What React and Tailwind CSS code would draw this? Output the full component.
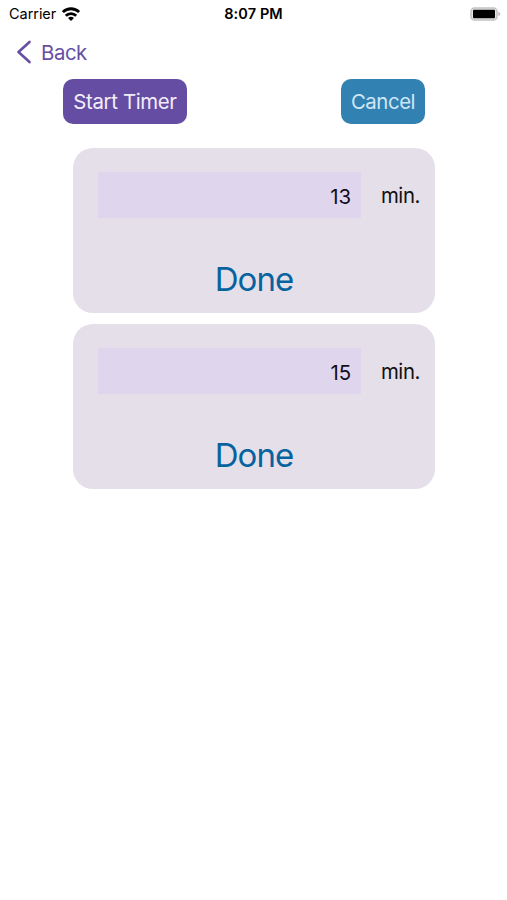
import React, { useState } from 'react';

const StatusBar = () => (
  <div className="grid grid-cols-3 items-center h-[28px] pl-[9px] pr-[6px] text-black">
    <div className="flex items-center gap-[6px]">
      <span className="text-[14.5px] tracking-[-0.05px]">Carrier</span>
      <svg className="w-[18px] h-[14px] -mt-px" viewBox="0 0 18 14" fill="none" stroke="currentColor" strokeWidth="2.8">
        <path d="M0.9 5.1a11.5 11.5 0 0 1 16.2 0" />
        <path d="M3.8 8.8a7.4 7.4 0 0 1 10.4 0" />
        <path d="M9 14L6 11.1a4.3 4.3 0 0 1 6 0z" fill="currentColor" stroke="none" />
      </svg>
    </div>
    <span className="-ml-[3px] text-center text-[14.5px] font-semibold tracking-[0.1px]">8:07 PM</span>
    <div className="flex items-center justify-end">
      <svg className="w-[31px] h-[14px] -mt-px" viewBox="0 0 31 14">
        <rect x="1" y="1" width="26" height="12" rx="3.5" fill="#e4e4e4" stroke="#c4c4c4" strokeWidth="1.6" />
        <rect x="3" y="2.8" width="22" height="8.4" rx="1" fill="#000" />
        <path d="M28.4 4.8v4.4c1-.4 1.8-1.2 1.8-2.2s-.8-1.8-1.8-2.2z" fill="#b8b8b8" />
      </svg>
    </div>
  </div>
);

const TimerCard = ({ value, onChange }) => (
  <div className="flex flex-col h-[165px] rounded-[20px] bg-[#e5dfea] pt-6 pl-[25px] pr-[15px]">
    <div className="flex items-center justify-between">
      <input
        type="text"
        inputMode="numeric"
        value={value}
        onChange={(e) => onChange(e.target.value)}
        className="w-[263px] h-[46px] pr-[10px] pt-[2px] bg-[#dfd6ee] text-right text-[20.4px] text-[#130d1a] tracking-[-0.1px] focus:outline-none"
      />
      <span className="pt-[3px] text-[20.4px] tracking-[-0.4px] text-[#111]">min.</span>
    </div>
    <button className="self-center mt-[40px] mr-[10px] w-[90px] text-[33px] leading-[42px] tracking-[-0.9px] text-[#0763a0]">
      Done
    </button>
  </div>
);

const App = () => {
  const [timers, setTimers] = useState(['13', '15']);

  const updateTimer = (index, value) => {
    setTimers(timers.map((timer, i) => (i === index ? value : timer)));
  };

  return (
    <div className="w-full min-h-screen bg-white font-['Inter',sans-serif]">
      <StatusBar />

      {/* Navigation */}
      <nav className="flex items-center h-[48px] pl-[16px]">
        <button className="flex items-center gap-[9px] text-[#6750a4]">
          <svg className="w-[16px] h-[24px]" fill="none" stroke="currentColor" viewBox="0 0 16 24">
            <path strokeLinecap="round" strokeLinejoin="round" strokeWidth={2.7} d="M13.5 2L2.5 12l11 10" />
          </svg>
          <span className="pt-[2px] text-[20.4px] tracking-[-0.45px]">Back</span>
        </button>
      </nav>

      {/* Actions */}
      <div className="flex justify-between pt-[3px] pl-[63px] pr-[82px]">
        <button className="w-[124px] h-[45px] pt-px rounded-[10px] bg-[#654da3] text-[20.4px] tracking-[-0.35px] text-[#f3edfa] whitespace-nowrap">
          Start Timer
        </button>
        <button className="w-[84px] h-[45px] pt-px rounded-[10px] bg-[#3281b3] text-[20.4px] tracking-[-0.45px] text-[#cfe6f7] whitespace-nowrap">
          Cancel
        </button>
      </div>

      {/* Timers */}
      <div className="flex flex-col gap-[11px] w-[362px] ml-[73px] mt-[24px]">
        {timers.map((timer, i) => (
          <TimerCard key={i} value={timer} onChange={(value) => updateTimer(i, value)} />
        ))}
      </div>
    </div>
  );
};

export default App;
